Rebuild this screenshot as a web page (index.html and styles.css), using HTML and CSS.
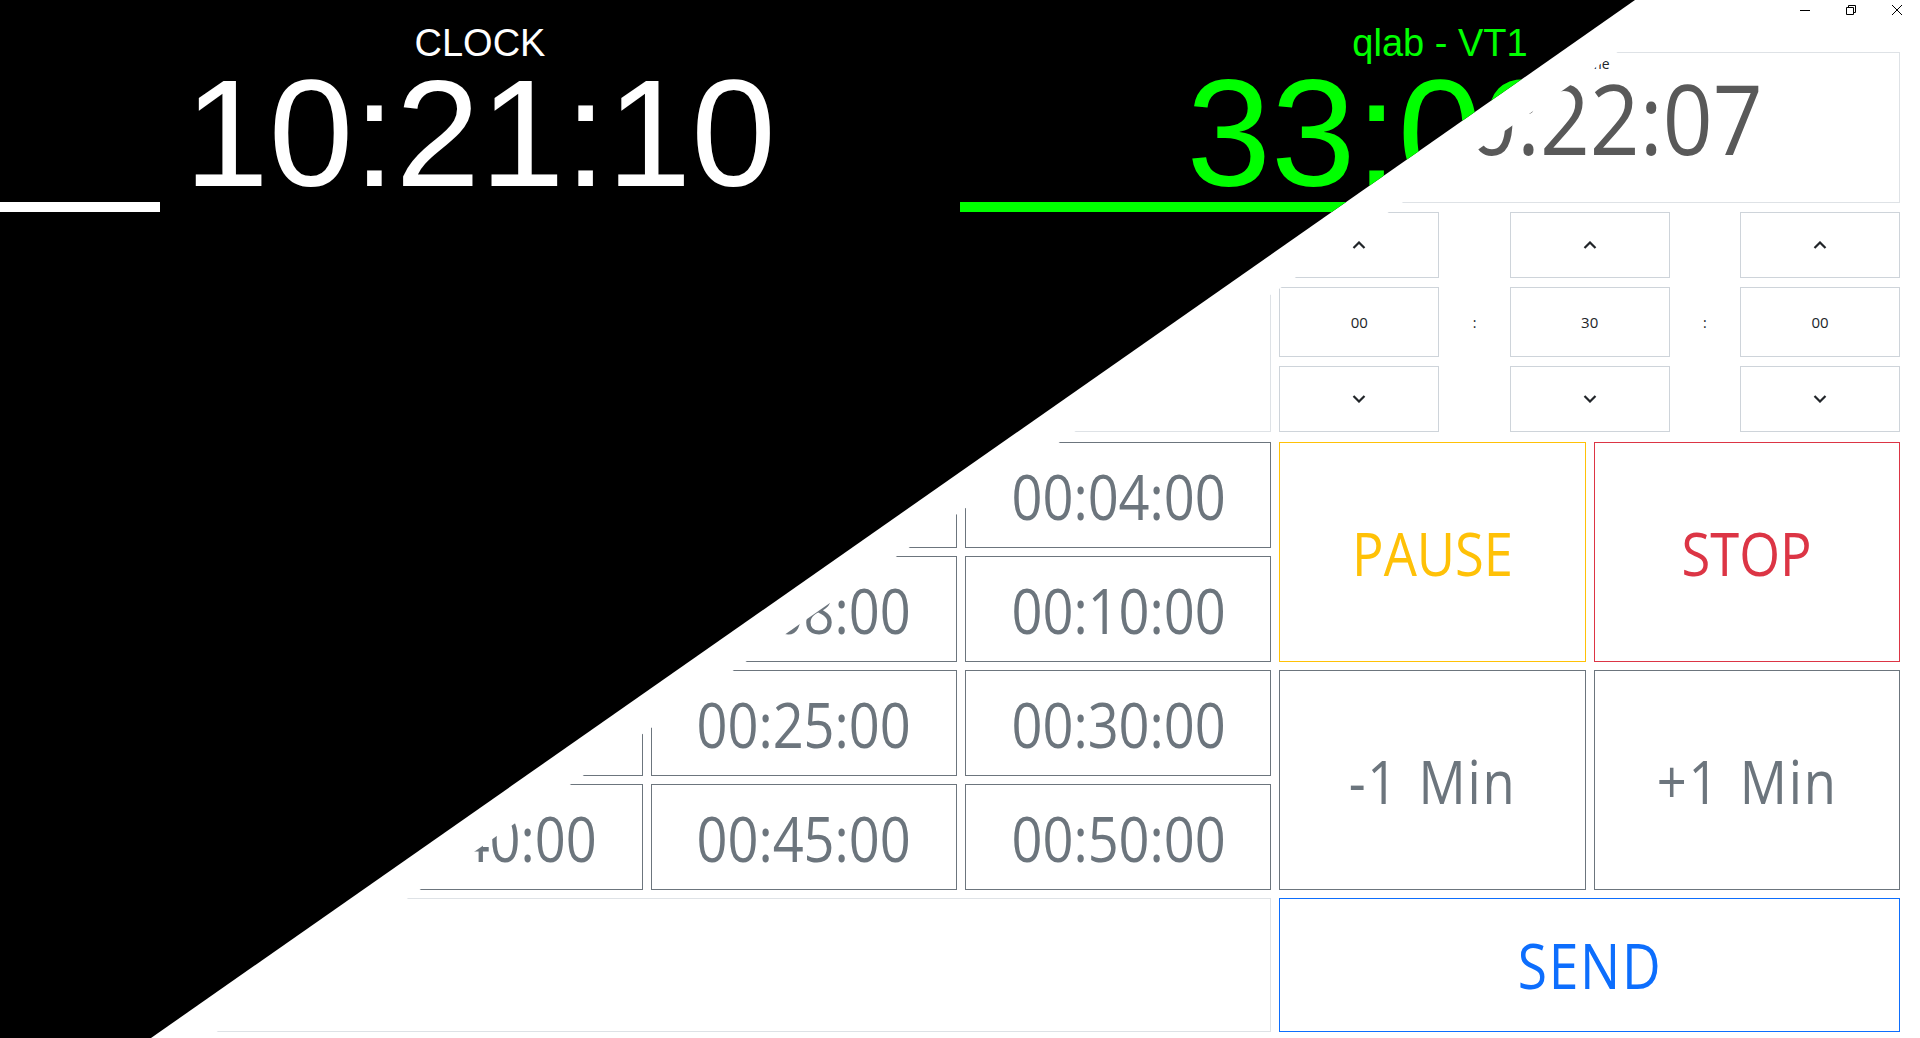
FILE: index.html
```html
<!DOCTYPE html>
<html lang="en">
<head>
<meta charset="utf-8">
<title>Timer</title>
<link rel="stylesheet" href="styles.css">
</head>
<body>
<div class="app">
  <div class="titlebar">
    <div class="winbtn"><svg width="10" height="10" viewBox="0 0 10 10"><path d="M0 5.5H10" stroke="#000" stroke-width="1"/></svg></div>
    <div class="winbtn"><svg width="10" height="10" viewBox="0 0 10 10"><path d="M0.5 2.5H7.5V9.5H0.5Z M2.5 2.5V0.5H9.5V7.5H7.5" fill="none" stroke="#000" stroke-width="1"/></svg></div>
    <div class="winbtn"><svg width="10" height="10" viewBox="0 0 10 10"><path d="M0 0L10 10M10 0L0 10" stroke="#000" stroke-width="1"/></svg></div>
  </div>
  <div class="controls">
    <div class="panel top-left"></div>
    <div class="panel timer">
      <div class="timer-label">Time</div>
      <div class="timer-value"><span class="sq wide">00:22:07</span></div>
    </div>
    <div class="spinner">
      <div class="spin-btn"><svg width="14" height="8" viewBox="0 0 14 8"><path d="M1.5 7L7 1.5L12.5 7" fill="none" stroke="#212529" stroke-width="2.2"/></svg></div>
      <div></div>
      <div class="spin-btn"><svg width="14" height="8" viewBox="0 0 14 8"><path d="M1.5 7L7 1.5L12.5 7" fill="none" stroke="#212529" stroke-width="2.2"/></svg></div>
      <div></div>
      <div class="spin-btn"><svg width="14" height="8" viewBox="0 0 14 8"><path d="M1.5 7L7 1.5L12.5 7" fill="none" stroke="#212529" stroke-width="2.2"/></svg></div>
      <div class="spin-val">00</div>
      <div class="spin-sep">:</div>
      <div class="spin-val">30</div>
      <div class="spin-sep">:</div>
      <div class="spin-val">00</div>
      <div class="spin-btn"><svg width="14" height="8" viewBox="0 0 14 8"><path d="M1.5 1L7 6.5L12.5 1" fill="none" stroke="#212529" stroke-width="2.2"/></svg></div>
      <div></div>
      <div class="spin-btn"><svg width="14" height="8" viewBox="0 0 14 8"><path d="M1.5 1L7 6.5L12.5 1" fill="none" stroke="#212529" stroke-width="2.2"/></svg></div>
      <div></div>
      <div class="spin-btn"><svg width="14" height="8" viewBox="0 0 14 8"><path d="M1.5 1L7 6.5L12.5 1" fill="none" stroke="#212529" stroke-width="2.2"/></svg></div>
    </div>

    <div class="preset"><span class="sq">00:01:00</span></div>
    <div class="preset"><span class="sq">00:02:00</span></div>
    <div class="preset"><span class="sq">00:03:00</span></div>
    <div class="preset"><span class="sq">00:04:00</span></div>
    <div class="big pause"><span class="sq">PAUSE</span></div>
    <div class="big stop"><span class="sq">STOP</span></div>

    <div class="preset"><span class="sq">00:05:00</span></div>
    <div class="preset"><span class="sq">00:06:00</span></div>
    <div class="preset"><span class="sq">00:08:00</span></div>
    <div class="preset"><span class="sq">00:10:00</span></div>

    <div class="preset"><span class="sq">00:15:00</span></div>
    <div class="preset"><span class="sq">00:20:00</span></div>
    <div class="preset"><span class="sq">00:25:00</span></div>
    <div class="preset"><span class="sq">00:30:00</span></div>
    <div class="big minus"><span class="sq spaced">-1 Min</span></div>
    <div class="big plus"><span class="sq spaced">+1 Min</span></div>

    <div class="preset"><span class="sq">00:35:00</span></div>
    <div class="preset"><span class="sq">00:40:00</span></div>
    <div class="preset"><span class="sq">00:45:00</span></div>
    <div class="preset"><span class="sq">00:50:00</span></div>

    <div class="panel bottom-left"></div>
    <div class="big send"><span class="sq">SEND</span></div>
  </div>
</div>

<div class="band"></div>

<div class="display">
  <div class="half">
    <div class="disp-label">CLOCK</div>
    <div class="disp-time">10:21:10</div>
    <div class="disp-bar white-bar"></div>
  </div>
  <div class="half green">
    <div class="disp-label">qlab - VT1</div>
    <div class="disp-time">33:09.4</div>
    <div class="disp-bar green-bar"></div>
  </div>
</div>
</body>
</html>
```

FILE: styles.css
```css
* {
  box-sizing: border-box;
  margin: 0;
  padding: 0;
}

html, body {
  width: 1920px;
  height: 1038px;
  overflow: hidden;
  background: #fff;
}

body {
  position: relative;
  font-family: "Open Sans", "Noto Sans", sans-serif;
  color: #212529;
}

.app {
  width: 1920px;
  height: 1038px;
  display: flex;
  flex-direction: column;
}

.titlebar {
  height: 20px;
  display: flex;
  justify-content: flex-end;
}

.winbtn {
  width: 46px;
  height: 20px;
  display: flex;
  align-items: center;
  justify-content: center;
}

.winbtn svg {
  display: block;
}

.controls {
  margin-top: 32px;
  padding: 0 20px 0 22px;
  display: grid;
  grid-template-columns: repeat(6, 1fr);
  grid-template-rows: 151px 223px 106px 106px 106px 106px 134px;
  column-gap: 8px;
  row-gap: 8px;
}

.sq {
  display: inline-block;
  transform: scaleX(0.86);
  white-space: nowrap;
}

.sq.wide {
  transform: scaleX(0.9);
}

.sq.spaced {
  letter-spacing: 2px;
  word-spacing: 5px;
}

.panel {
  border: 1px solid #dee2e6;
  background: #fff;
}

.top-left {
  grid-column: 1 / 5;
  grid-row: 1 / 3;
  margin-bottom: 2px;
}

.timer {
  grid-column: 5 / 7;
  grid-row: 1;
  position: relative;
  display: flex;
  align-items: center;
  justify-content: center;
}

.timer-label {
  position: absolute;
  top: 1px;
  left: 8px;
  right: 0;
  text-align: center;
  font-size: 14px;
  color: #212529;
}

.timer-value {
  font-size: 97px;
  line-height: 1;
  color: #595959;
  margin-top: -20px;
}

.spinner {
  grid-column: 5 / 7;
  grid-row: 2;
  margin: 1px 0 2px;
  display: grid;
  grid-template-columns: 160px 1fr 160px 1fr 160px;
  grid-template-rows: 66px 1fr 66px;
  row-gap: 9px;
}

.spin-btn, .spin-val {
  border: 1px solid #ced4da;
  display: flex;
  align-items: center;
  justify-content: center;
}

.spin-val {
  font-size: 15px;
  color: #212529;
}

.spin-sep {
  display: flex;
  align-items: center;
  justify-content: center;
  font-size: 14px;
  color: #212529;
}

.preset, .big {
  border: 1px solid #6c757d;
  background: #fff;
  display: flex;
  align-items: center;
  justify-content: center;
  color: #6c757d;
}

.preset {
  font-size: 63px;
  line-height: 1;
}

.big {
  font-size: 61px;
  line-height: 1;
  grid-row: span 2;
}

.pause {
  grid-column: 5;
  border-color: #ffc107;
  color: #ffc107;
}

.stop {
  grid-column: 6;
  border-color: #dc3545;
  color: #dc3545;
}

.minus {
  grid-column: 5;
}

.plus {
  grid-column: 6;
}

.bottom-left {
  grid-column: 1 / 5;
  grid-row: 7;
}

.send {
  grid-column: 5 / 7;
  grid-row: 7;
  border-color: #0d6efd;
  color: #0d6efd;
  font-size: 62px;
  letter-spacing: 2px;
}

.band {
  position: absolute;
  inset: 0;
  background: #fff;
  clip-path: polygon(0 0, 1692px 0, 208px 1038px, 0 1038px);
}

.display {
  position: absolute;
  inset: 0;
  background: #000;
  clip-path: polygon(0 0, 1635px 0, 151px 1038px, 0 1038px);
  display: flex;
  font-family: "Liberation Sans", Arial, sans-serif;
  color: #fff;
}

.half {
  width: 960px;
  display: flex;
  flex-direction: column;
  align-items: center;
}

.disp-label {
  margin-top: 24px;
  font-size: 38px;
  line-height: 38px;
}

.disp-time {
  margin-top: 11px;
  font-size: 152px;
  line-height: 120px;
}

.disp-bar {
  align-self: flex-start;
  height: 10px;
  margin-top: 9px;
}

.white-bar {
  width: 160px;
  background: #fff;
}

.green {
  color: #00ff00;
}

.green-bar {
  width: 620px;
  background: #00ff00;
}
```
